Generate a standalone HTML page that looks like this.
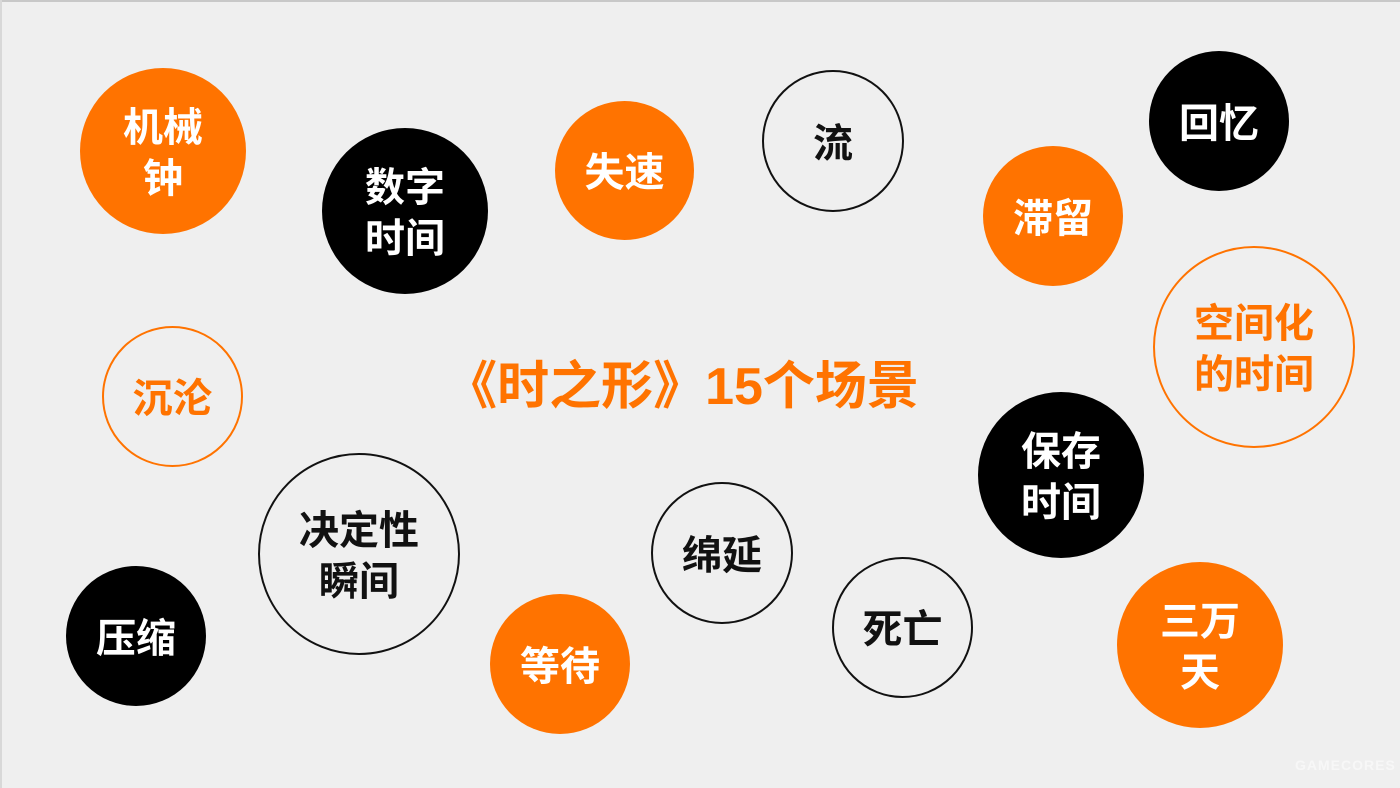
<!DOCTYPE html>
<html><head><meta charset="utf-8"><style>
html,body{margin:0;padding:0}
body{width:1400px;height:788px;background:#efefef;position:relative;overflow:hidden;font-family:"Liberation Sans","Noto Sans CJK SC",sans-serif;font-weight:bold}
.top{position:absolute;left:0;top:0;width:1400px;height:2px;background:#c8c8c8}
.left{position:absolute;left:0;top:0;width:2px;height:788px;background:#d8d8d8}
.c{position:absolute;border-radius:50%;display:flex;align-items:center;justify-content:center;text-align:center;font-size:40px;line-height:51px;box-sizing:border-box;padding-top:6px}
.o{background:#ff7300;color:#fff}
.b{background:#000;color:#fff}
.ok{border:2.5px solid #111;color:#111}
.oo{border:2.5px solid #ff7300;color:#ff7300}
.t{position:absolute;left:380px;top:355px;width:604px;text-align:center;font-size:52px;color:#ff7300;line-height:64px;white-space:nowrap}
.wm{position:absolute;left:1295px;top:757px;font-size:14px;color:#f7f7f7;letter-spacing:1px}
</style></head><body>
<div class="top"></div><div class="left"></div>
<div class="c o" style="left:80px;top:68px;width:166px;height:166px">机械<br>钟</div>
<div class="c b" style="left:322px;top:128px;width:166px;height:166px">数字<br>时间</div>
<div class="c o" style="left:555px;top:101px;width:139px;height:139px">失速</div>
<div class="c ok" style="left:762px;top:70px;width:142px;height:142px">流</div>
<div class="c b" style="left:1149px;top:51px;width:140px;height:140px">回忆</div>
<div class="c o" style="left:983px;top:146px;width:140px;height:140px">滞留</div>
<div class="c oo" style="left:1153px;top:246px;width:202px;height:202px">空间化<br>的时间</div>
<div class="c oo" style="left:102px;top:326px;width:141px;height:141px">沉沦</div>
<div class="t">《时之形》15个场景</div>
<div class="c b" style="left:978px;top:392px;width:166px;height:166px">保存<br>时间</div>
<div class="c ok" style="left:258px;top:453px;width:202px;height:202px">决定性<br>瞬间</div>
<div class="c ok" style="left:651px;top:482px;width:142px;height:142px">绵延</div>
<div class="c b" style="left:66px;top:566px;width:140px;height:140px">压缩</div>
<div class="c o" style="left:490px;top:594px;width:140px;height:140px">等待</div>
<div class="c ok" style="left:832px;top:557px;width:141px;height:141px">死亡</div>
<div class="c o" style="left:1117px;top:562px;width:166px;height:166px">三万<br>天</div>
<div class="wm">GAMECORES</div>
</body></html>
